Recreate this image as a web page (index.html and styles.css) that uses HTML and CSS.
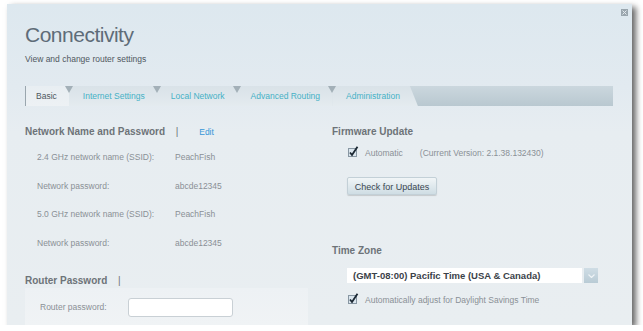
FILE: index.html
```html
<!DOCTYPE html>
<html lang="en">
<head>
    <meta charset="UTF-8">
    <meta name="viewport" content="width=device-width, initial-scale=1.0">
    <title>Connectivity</title>
    <link rel="stylesheet" href="styles.css">
</head>
<body>
    <div class="window">
        <svg class="close" width="7" height="7" viewBox="0 0 7 7">
            <rect x="0" y="0" width="7" height="7" fill="#9aa6ae"/>
            <path d="M1.5 1.5 L5.5 5.5 M5.5 1.5 L1.5 5.5" stroke="#e4eaee" stroke-width="1"/>
        </svg>

        <div class="header">
            <h1>Connectivity</h1>
            <p class="subtitle">View and change router settings</p>
        </div>

        <div class="tabs">
            <div class="tab active">Basic</div>
            <div class="tab">Internet Settings</div>
            <div class="tab">Local Network</div>
            <div class="tab">Advanced Routing</div>
            <div class="tab last">Administration</div>
        </div>

        <div class="content">
            <div class="col left">
                <div class="heading">Network Name and Password <span class="sep">|</span> <a class="edit">Edit</a></div>
                <div class="row first"><span class="label">2.4 GHz network name (SSID):</span><span class="value">PeachFish</span></div>
                <div class="row"><span class="label">Network password:</span><span class="value">abcde12345</span></div>
                <div class="row"><span class="label">5.0 GHz network name (SSID):</span><span class="value">PeachFish</span></div>
                <div class="row"><span class="label">Network password:</span><span class="value">abcde12345</span></div>

                <div class="heading router">Router Password <span class="sep">|</span></div>
                <div class="box">
                    <span class="box-label">Router password:</span>
                    <div class="input"></div>
                </div>
            </div>

            <div class="col right">
                <div class="heading">Firmware Update</div>
                <div class="check-row">
                    <svg class="check" width="11" height="11" viewBox="0 0 11 11">
                        <rect x="0.5" y="2.5" width="8" height="8" fill="#dbe6ee" stroke="#8897a3"/>
                        <path d="M2 6.5 L4 9 L9.5 0.8" fill="none" stroke="#1c2833" stroke-width="1.8"/>
                    </svg>
                    <span class="check-label">Automatic</span>
                    <span class="version">(Current Version: 2.1.38.132430)</span>
                </div>
                <div class="button">Check for Updates</div>

                <div class="heading zone">Time Zone</div>
                <div class="select-row">
                    <div class="select">(GMT-08:00) Pacific Time (USA &amp; Canada)</div>
                    <div class="select-btn">
                        <svg width="7" height="4" viewBox="0 0 7 4">
                            <path d="M0.5 0.5 L3.5 3.5 L6.5 0.5" fill="none" stroke="#eef3f6" stroke-width="1.2"/>
                        </svg>
                    </div>
                </div>
                <div class="check-row dst">
                    <svg class="check" width="11" height="11" viewBox="0 0 11 11">
                        <rect x="0.5" y="2.5" width="8" height="8" fill="#dbe6ee" stroke="#8897a3"/>
                        <path d="M2 6.5 L4 9 L9.5 0.8" fill="none" stroke="#1c2833" stroke-width="1.8"/>
                    </svg>
                    <span class="check-label">Automatically adjust for Daylight Savings Time</span>
                </div>
            </div>
        </div>
    </div>
</body>
</html>
```

FILE: styles.css
```css
body {
    margin: 0;
    padding: 0;
    background: white;
    font-family: "Liberation Sans", Arial, sans-serif;
    overflow: hidden;
}

.window {
    position: relative;
    margin: 4px 0 0 7px;
    width: 625px;
    height: 321px;
    background: linear-gradient(to bottom, #dde8ef 0%, #e2eaf0 26%, #e7edf1 40%, #e9eef1 100%);
    box-shadow: 4px 3px 6px rgba(0, 0, 0, 0.6);
    overflow: hidden;
}

.close {
    position: absolute;
    top: 5px;
    left: 614px;
}

.header {
    padding: 18px 18px 0;
}

h1 {
    margin: 0;
    font-size: 21px;
    line-height: 26px;
    font-weight: normal;
    letter-spacing: -0.5px;
    color: #5e6c78;
}

.subtitle {
    margin: 5px 0 0;
    font-size: 8.5px;
    line-height: 12px;
    color: #50585f;
}

/* Tab strip */
.tabs {
    display: flex;
    margin: 21px 19px 0 18px;
    height: 20px;
    background: linear-gradient(to bottom, #cbd7de, #b9c8d0);
}

.tab {
    position: relative;
    padding: 0 12px 0 14px;
    line-height: 20px;
    font-size: 8.5px;
    color: #45b1c6;
    background: linear-gradient(to bottom, #d9e2e8, #e4ebef);
}

.tab::after {
    content: "";
    position: absolute;
    top: 0;
    right: -4px;
    border-top: 7px solid #a3b0b8;
    border-left: 4px solid transparent;
    border-right: 4px solid transparent;
    z-index: 1;
}

.tab.active {
    padding-left: 10px;
    color: #4f575e;
    background: linear-gradient(to bottom, #e8eef2, #edf1f4);
    border-left: 1px solid #9aa6ae;
}

.tab.last {
    padding-right: 18px;
    clip-path: polygon(0 0, calc(100% - 8px) 0, 100% 100%, 0 100%);
}

.tab.last::after {
    display: none;
}

/* Content */
.content {
    display: flex;
    padding: 19px 0 0 18px;
}

.col.left {
    width: 283px;
}

.col.right {
    margin-left: 24px;
    flex: 1;
}

.heading {
    font-size: 10px;
    line-height: 14px;
    font-weight: bold;
    color: #6d7378;
}

.sep {
    font-weight: normal;
    margin: 0 18px 0 8px;
}

.edit {
    font-weight: normal;
    font-size: 8.5px;
    color: #3596d8;
}

.row {
    display: flex;
    align-items: center;
    height: 28.5px;
    padding-left: 12px;
    font-size: 8.5px;
    color: #8a9096;
}

.row.first {
    margin-top: 4px;
}

.label {
    width: 138px;
}

.heading.router {
    margin-top: 17px;
}

.box {
    display: flex;
    align-items: center;
    height: 38px;
    padding: 0 0 0 15px;
    background: linear-gradient(to bottom, #edf1f4, #f0f3f5);
    font-size: 8.5px;
    color: #8a9096;
}

.box-label {
    width: 88px;
}

.input {
    width: 103px;
    height: 17px;
    background: white;
    border: 1px solid #c9d0d5;
    border-radius: 3px;
}

.check-row {
    display: flex;
    align-items: center;
    margin: 7px 0 0 16px;
    height: 14px;
    font-size: 8.5px;
    color: #8a9096;
}

.check {
    margin-top: -3px;
    margin-right: 6px;
}

.version {
    margin-left: 17px;
}

.button {
    display: inline-block;
    margin: 17px 0 0 15px;
    width: 90px;
    height: 18px;
    line-height: 18px;
    text-align: center;
    font-size: 9px;
    color: #3a4650;
    background: linear-gradient(to bottom, #f1f5f7, #cfdde4);
    border: 1px solid #c3d0d7;
    border-radius: 2px;
    box-sizing: border-box;
    box-shadow: 0 1px 1px rgba(0, 0, 0, 0.15);
}

.heading.zone {
    margin-top: 49px;
}

.select-row {
    display: flex;
    gap: 2px;
    margin: 10px 0 0 15px;
}

.select {
    width: 235px;
    height: 15px;
    line-height: 15px;
    padding-left: 6px;
    box-sizing: border-box;
    background: white;
    font-size: 9.5px;
    font-weight: bold;
    color: #3b4249;
}

.select-btn {
    display: flex;
    align-items: center;
    justify-content: center;
    width: 14px;
    height: 15px;
    background: linear-gradient(to bottom, #cfdde5, #b9cbd5);
}

.check-row.dst {
    margin-top: 10px;
}
```
